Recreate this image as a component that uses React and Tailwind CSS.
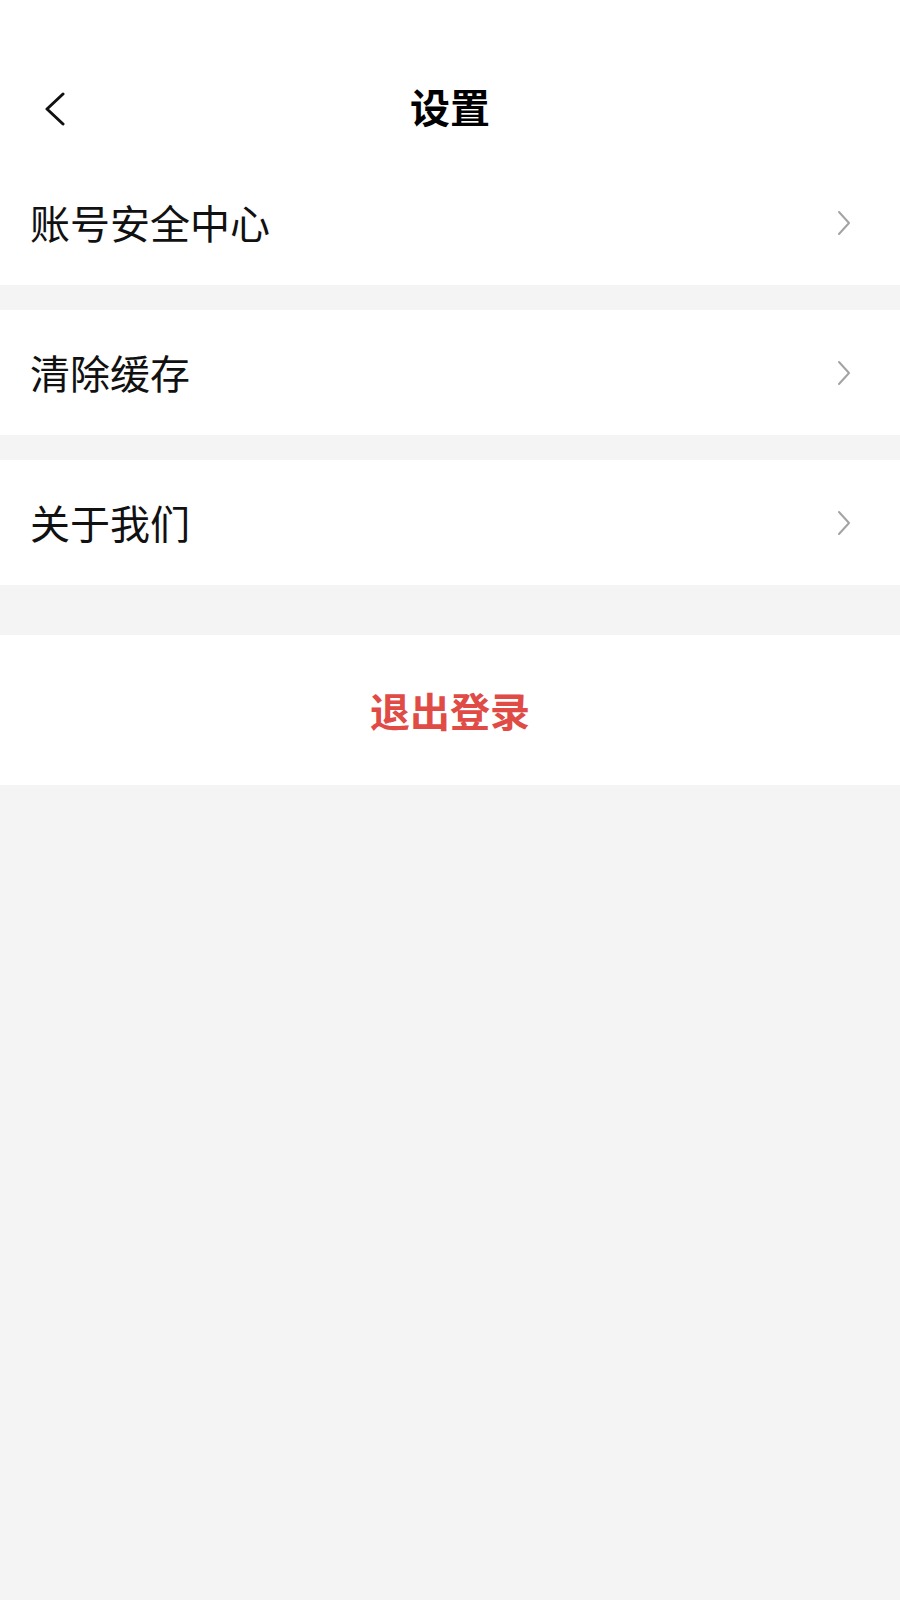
import React from "react";

const items = ["账号安全中心", "清除缓存", "关于我们"];

function Chevron() {
  return (
    <svg width="16" height="26" viewBox="0 0 16 26" fill="none" className="shrink-0">
      <path d="M3 2 L13 13 L3 24" stroke="#a3a3a3" strokeWidth="2" strokeLinecap="round" strokeLinejoin="round" />
    </svg>
  );
}

export default function App() {
  return (
    <div
      className="min-h-[1600px] bg-[#f4f4f4] flex flex-col"
      style={{ fontFamily: '"Noto Sans CJK SC", "Noto Sans", sans-serif' }}
    >
      {/* Header */}
      <div className="h-[160px] bg-white flex items-start pt-[82px] relative">
        <button className="ml-[44px] mt-[10px]">
          <svg width="22" height="34" viewBox="0 0 22 34" fill="none">
            <path d="M19 2 L3 17 L19 32" stroke="#111" strokeWidth="3" strokeLinecap="round" strokeLinejoin="round" />
          </svg>
        </button>
        <div className="absolute left-0 right-0 top-[79px] text-center text-[40px] leading-[54px] font-bold text-black">
          设置
        </div>
      </div>

      {/* Menu */}
      <div className="flex flex-col gap-[25px]">
        {items.map((t) => (
          <div key={t} className="h-[125px] bg-white flex items-center justify-between pl-[30px] pr-[48px]">
            <span className="text-[40px] leading-none text-[#111] -mt-[2px]">{t}</span>
            <Chevron />
          </div>
        ))}
      </div>

      {/* Logout */}
      <div className="mt-[50px] h-[150px] bg-white flex items-center justify-center">
        <span className="text-[40px] leading-none font-bold text-[#e04b46]">退出登录</span>
      </div>
    </div>
  );
}
